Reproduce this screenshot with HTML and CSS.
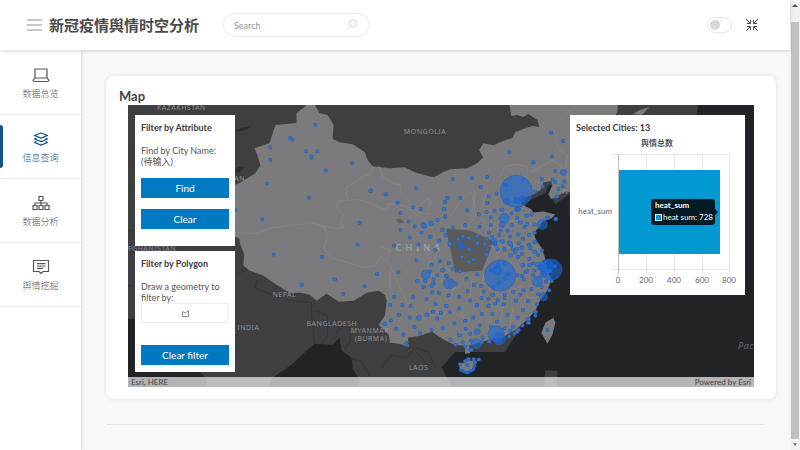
FILE: index.html
```html
<!DOCTYPE html>
<html lang="zh-CN">
<head>
<meta charset="utf-8">
<title>新冠疫情舆情时空分析</title>
<link rel="stylesheet" href="styles.css">
</head>
<body>
<div class="viewport">
  <div class="app">
    <header class="topbar">
      <button class="icon-button" aria-label="Menu"><svg width="15" height="12" viewBox="0 0 15 12"><path d="M0 1h15M0 6h15M0 11h15" stroke="#8b8d8f"/></svg></button>
      <h1 class="brand">新冠疫情舆情时空分析</h1>
      <form class="search">
        <input type="text" placeholder="Search" aria-label="Search">
        <button class="icon-button" type="button" aria-label="Submit search"><svg width="12" height="12" viewBox="0 0 12 12" fill="none" stroke="#cfcfcf"><circle cx="7" cy="4.5" r="3.7"/><path d="M4.3 7.2L.8 10.8"/></svg></button>
      </form>
      <input class="switch" type="checkbox" aria-label="Dark mode">
      <button class="icon-button" aria-label="Exit full screen"><svg width="12" height="12" viewBox="0 0 12 12" fill="none" stroke="#555"><path d="M0 0l4.5 4.5M1 4.5h3.5V1M12 0L7.5 4.5M11 4.5H7.500V1M0 12l4.500-4.500M1 7.500h3.500V11M12 12L7.500 7.500M11 7.500H7.500V11"/></svg></button>
    </header>
    <div class="body">
      <nav class="sidebar">
        <a class="nav-item" href="#"><svg width="18" height="16" viewBox="0 0 18 16" fill="none" stroke="#555" stroke-width="1.2"><path d="M3 11V2h12v9M3 11h12l2 2.500q-.2 1-1.200 1H2.200q-1 0-1.200-1z"/></svg>数据总览</a>
        <a class="nav-item active" href="#"><svg width="18" height="16" viewBox="0 0 18 16" fill="none" stroke="#145388" stroke-width="1.3" stroke-linejoin="round"><path d="M9 2l6.500 2.500L9 7.200 2.500 4.500zM4.500 7l-2 1L9 10.700 15.500 8l-2-1M4.500 10.500l-2 1L9 14.200l6.500-2.700-2-1"/></svg>信息查询</a>
        <a class="nav-item" href="#"><svg width="18" height="16" viewBox="0 0 18 16" fill="none" stroke="#555" stroke-width="1.2"><path d="M7 1.500h4v4H7zM1 10.500h4v4H1zM7 10.500h4v4H7zM13 10.500h4v4h-4zM9 5.500v5M3 10.500V8h12v2.500"/></svg>数据分析</a>
        <a class="nav-item" href="#"><svg width="18" height="16" viewBox="0 0 18 16" fill="none" stroke="#555" stroke-width="1.2"><path d="M1.500 1.500h15v11H11L9 14.500l-2-2H1.500zM5 4.700h8.500M5 7h8.500M5 9.300h6"/></svg>舆情挖掘</a>
      </nav>
      <main class="content">
        <section class="card">
          <h2 class="card-title">Map</h2>
          <div class="map">
            <svg class="map-canvas" viewBox="128 105 626 281" preserveAspectRatio="xMidYMid slice" role="img" aria-label="Map of China">
              <defs>
                <g id="small">
                  <path transform="translate(120 80) scale(.3333)" d="M512 173h0M519 179h0M453 201h0M453 239h0M443 310h0M348 389h0M429 417h0M463 522h0M547 612h0"/>
                  <path transform="translate(300 100) scale(.3333)" d="M48 74h0M19 153h0M53 153h0M36 169h0M36 173h0M79 211h0M158 190h0M28 292h0M212 271h2M257 282h2M349 264h0M293 307h1M302 338h0M339 321h0M362 327h0M180 367h0M174 432h0M302 389h0M326 364h0M345 378h0M412 359h1M435 348h1M431 327h1M435 305h0M442 293h0M365 396h0M330 411h0M390 409h2M418 420h1M428 389h0M437 405h0M283 436h0M355 432h0M448 428h0M406 448h0"/>
                  <path transform="translate(440 100) scale(.3333)" d="M332 97h0M368 123h1M207 156h1M335 168h0M277 186h3M38 237h0M96 233h0M141 230h0M122 261h0M60 293h1M23 293h0M15 305h0M11 327h1M15 348h0M81 330h1M141 308h0M146 288h0M169 280h0M116 342h0M139 335h0M163 331h0M184 328h3M152 351h0M118 379h0M75 374h1M38 381h0M152 374h0M7 389h0M17 404h0M146 396h0M214 339h0M231 353h0M257 346h3M274 342h0M285 274h0M304 236h0M307 259h0M345 212h0M337 238h0M345 246h0M371 244h1M367 258h0M354 267h0M348 289h2M319 352h4M345 356h2M238 366h5M261 370h0M253 379h0M214 374h1M282 372h1M202 390h0M182 391h0M178 404h0M210 408h0M233 402h1M266 404h1M283 397h0M248 415h0M186 423h1M210 430h2M235 428h0M244 441h1M270 443h0M283 425h1M156 409h0M140 416h0M112 407h0M112 428h0M133 430h0M86 413h0M69 408h0M54 417h0M30 428h0M231 326h5M166 432h0M192 444h0M218 446h0M140 447h0M86 447h0M196 254h2M250 239h0"/>
                  <path transform="translate(300 240) scale(.3333)" d="M67 49h0M104 117h2M7 132h0M131 160h0M195 137h0M232 100h0M296 94h0M350 59h0M395 72h1M420 62h0M446 68h0M427 89h3M390 92h0M412 104h0M438 107h0M402 115h0M376 121h0M352 121h1M371 138h1M400 128h1M395 136h1M395 155h2M417 156h0M380 175h0M339 170h0M283 168h0M271 192h0M307 194h0M332 196h0M296 222h1M273 239h0M254 250h2M289 264h0M330 231h0M380 222h2M399 213h1M422 217h0M407 190h0M438 196h2M412 233h0M343 259h1M360 276h0M395 268h1M429 263h0M311 282h0M316 311h1"/>
                  <path transform="translate(440 240) scale(.3333)" d="M112 9h0M133 10h0M162 7h3M185 3h2M213 15h0M231 25h0M207 7h0M172 26h0M193 27h0M210 45h2M138 42h2M66 49h0M99 57h0M86 27h0M30 14h0M223 36h0M233 49h0M245 40h0M244 21h2M265 13h1M270 23h0M283 4h1M282 34h2M305 30h0M293 43h0M267 55h0M246 73h3M267 74h1M261 91h0M256 95h0M278 69h2M293 70h4M297 83h0M303 79h4M290 74h0M312 64h0M306 96h0M315 104h0M326 91h4M344 76h0M317 123h0M334 121h0M303 107h0M282 90h0M278 103h0M245 106h0M251 117h0M231 103h0M304 139h0M326 149h1M293 161h1M274 145h0M249 149h1M240 162h0M218 153h1M226 180h2M194 162h0M193 172h0M190 191h1M172 179h0M165 189h0M156 162h2M145 174h0M131 153h0M144 196h2M124 172h0M109 194h2M90 179h0M101 133h0M83 152h0M122 136h0M79 114h0M111 101h1M38 86h4M7 89h0M19 107h1M48 130h0M26 164h0M58 168h0M18 196h1M58 203h0M30 214h0M3 216h0M43 248h0M75 241h1M99 231h0M125 220h1M156 220h0M170 243h1M202 222h1M232 231h1M248 208h0M263 182h1M290 191h1M284 214h3M263 235h3M263 246h3M285 225h0M247 254h0M235 268h0M231 273h0M218 258h1M194 262h0M222 279h0M207 287h0M210 270h0M118 254h0M77 265h0M90 279h0M56 283h4M32 297h0M46 312h0M68 304h0M75 317h1M93 299h0M125 305h0M127 290h0M146 302h2M152 258h0M10 262h0M86 64h0M60 91h0M173 73h2M193 67h0M203 100h1M195 114h0M177 128h0M160 140h0M152 90h0M94 327h-4M60 370h0M84 355h2M75 361h0M100 355h1M115 356h1M82 373h0M105 364h0M322 268h0"/>
                </g>
                <path id="borders" d="M348 200l-2-12 13-9 13-7 1-6M379 166l4 11 12 7h5l2 9 9 10 8 10h12M235 232l24 1 11-5 18-3 15-1 7-2 15 4 12 2 7-1-3-6 3-6-7-8 2-6 18-2 15 4 12 6h4v-6l18 3 16 12 10 10 3 7M324 226l4 10-4 12 8 10 17 4 15 5 12-2 5-9 9 8 5 12 12 25 6 11 12 7 2-6 13-7 10 4 7-5-7-8 5-12-2-9M390 268l0 17 4 9M381 246l10 4-5 8M438 250l-4 10-7 3 3 12 11 3 5 12M419 206l10-8 2 4-4 8M450 218l8-14 13-13 4 15-3 15-12 7M475 190l-3 22 13 9 2 10M487 190l-5 18 10 8-2 15M500 177l4-10 12-3 11 3-1 13M530 172l22-12 12 9 4 13M556 135l2 14 9 6-2 13M561 119l13-12M493 225l10-6 18 2 12 3M489 245l9 5 21-6M505 237l8 8 11 3M497 260l0-13M518 268l12-9 5 10M507 291l14-6 8 13 11-3M472 275l-2 22-10 12 7 20-15 8M484 273l-4 17 3 23-9 17M505 296l-4 20-8 17M513 306l-4 19M520 295l4 18-10 20M430 308l12 6 9-4 9 6M480 315l12-10 13 2M447 289l12-2 7-13M502 230l-3 23"/>
              </defs>
              <rect x="100" y="80" width="700" height="330" fill="#3f3f41"/>
              <path fill="#222327" d="M128 318l13 0 66 59v12h-80zM273 377l20-14 14-13 8-7 18 1 7-7 2 13 10 7 1 11 6 9v12h-90zM683 105l8 90-35 20h-87v-21l-14 10-3-6 5-12-9-1-3 8-20 9v7l10 7-5 25 10 55-35 55-50 0-13 15v14l5 20h320V105z"/>
              <path fill="#2f2f31" d="M234 131l7-3 11-2-5 4-13 2zM234 169l7-3 4 1-4 5h-7z"/>
              <path fill="#3f3f41" d="M434 377l8-10 10 20h-20zM544 377l1-8 12 1v20h-13zM667 105h30l-7 60-24 20z"/>
              <path fill="#7b7b7d" d="M297 123v-10l8-6 2-4h7l6 10 8 2 6 10-1 14 7 3 13 2 12 8 3 8 5 6 17 2 15-1 10 5 10 3 9 2 9-5 7-3 17-1 10-5 6-6-4-7 4-7 10 2 9-4 10-3 3-6 8-3 9-3 7 1-2-7-9-6-5 3-6-2-6 1-2-13h108v8l-40 82-12-2-8 5-6 3-3-5 4-9-1-4-8 1-2 7-8 5-12 5v5l10 5 2 3 10-1 12 3-4 4-9 3-3 6-6 5 3 8 5 7 3 8 3 15 4 9-4 11-7 9-5 11-8 9-12 10-13 8-12 2-11 3-10 3 1 7-5 1v-8l-11-1-10-5-12-8-12 4-12 2 1 9-10-3-9-1-1-8-10-10 6-9 2-15-2-6-6-4-12 2-13 8-15 1-12-8-10 7-7-6-8-2h-12l-13-8-13-9-14-5-6-5 1-11-4-10-1-6-7-3v-49l12-6 11-7 5-8-3-10-3-7 15-5 6-18z"/>
              <path fill="#7b7b7d" d="M545 322l8-5 2 5-3 12-5 9-6-11zM459 364l9-5 8 2-2 9-8 2-6-3zM632 114l7-4 10-3-8 8z"/>
              <path d="M446 228l24 2 22 10-1 8-9 22-27 2-3-15z" fill="#5b5b5b"/>
              <path fill="#606062" d="M396 219l4-1 4 4-5 1z"/>
              <use href="#borders" class="border-lines"/>
              <path class="country-lines" d="M258 279l-2 8 15 7 20 6 21 2v12l3 28M316 310l12 5v20l-6 8M337 333l5-8 7 2 2 12-6 10M381 368l10-14 15 3 10-10 12 4 8 16M129 285h6M129 230h6M406 340l14 15 8 10M350 357l12 4 9 16M247 268l-12 8"/>
              <g class="map-labels">
                <text x="158" y="110">KAZAKHSTAN</text>
                <text x="404" y="134">MONGOLIA</text>
                <text x="235" y="181">AN</text>
                <text x="129" y="250">FGHANISTAN</text>
                <text x="273" y="296">NEPAL</text>
                <text x="238" y="329">INDIA</text>
                <text x="307" y="325">BANGLADESH</text>
                <text x="351" y="332">MYANMAR</text>
                <text x="355" y="340">(BURMA)</text>
                <text x="409" y="369">LAOS</text>
                <text x="562" y="194">N</text>
                <text x="396" y="250" class="china-label">CHINA</text>
                <text x="737" y="348" class="ocean-label">Pac</text>
              </g>
              <use href="#small" class="dot-ring"/>
              <use href="#small" class="dot-fill"/>
              <g class="bubbles">
                <circle cx="516" cy="191" r="16"/><circle cx="500" cy="275" r="15.500"/><circle cx="551" cy="269" r="10.500"/><circle cx="546" cy="266" r="7"/><circle cx="537" cy="281" r="5"/><circle cx="496" cy="333" r="8"/><circle cx="499" cy="338" r="6"/><circle cx="476" cy="343" r="5"/><circle cx="504" cy="218" r="5"/><circle cx="502" cy="224" r="3"/><circle cx="542" cy="224" r="5"/><circle cx="449" cy="283" r="5.500"/><circle cx="426" cy="274" r="4.500"/><circle cx="461" cy="245" r="4"/><circle cx="424" cy="225" r="3"/><circle cx="431" cy="223" r="2.500"/><circle cx="419" cy="317" r="2.500"/><circle cx="563" cy="172" r="3"/><circle cx="506" cy="201" r="3"/><circle cx="517" cy="200" r="3"/><circle cx="522" cy="199" r="3"/><circle cx="517" cy="209" r="2.500"/><circle cx="543" cy="296" r="4"/><circle cx="477" cy="331" r="3"/><circle cx="497" cy="270" r="4"/><circle cx="494" cy="241" r="3"/>
              </g>
              <path d="M460 369l7 3 6-3 2-5" fill="none" stroke="#1c64c4" stroke-width="3" stroke-linecap="round" stroke-dasharray="1 2"/>
            </svg>
            <div class="map-overlay">
              <div class="filters">
                <section class="panel panel-attribute">
                  <h3>Filter by Attribute</h3>
                  <p>Find by City Name:<br>(待输入)</p>
                  <button class="action">Find</button>
                  <button class="action">Clear</button>
                </section>
                <section class="panel panel-polygon">
                  <h3>Filter by Polygon</h3>
                  <p>Draw a geometry to filter by:</p>
                  <button class="draw" aria-label="Draw polygon"><svg width="9" height="9" viewBox="0 0 9 9" fill="none" stroke="#8a8a7c"><path d="M1.500 2.500v5h6V1.500L4.500 4z"/></svg></button>
                  <button class="action">Clear filter</button>
                </section>
              </div>
              <section class="panel chart-panel">
                <h3>Selected Cities: 13</h3>
                <svg class="chart" viewBox="570 135 175 160" role="img" aria-label="舆情总数">
                  <text x="657" y="146" class="chart-title">舆情总数</text>
                  <path d="M646.500 154v120M674.500 154v120M702.500 154v120M729.500 154v120M612 154.500h118M612 269.500h118" stroke="#e3e3e3" fill="none"/>
                  <path d="M618.500 154v120" stroke="#bdbdbd"/>
                  <rect x="619" y="170" width="101" height="84" fill="#0299d3"/>
                  <g class="axis"><text x="612" y="214" class="axis-y">heat_sum</text><text x="618" y="283">0</text><text x="646" y="283">200</text><text x="674" y="283">400</text><text x="702" y="283">600</text><text x="729" y="283">800</text></g>
                  <path d="M654 199h58q3 0 3 3v7l3 3-3 3v7q0 3-3 3h-58q-3 0-3-3v-20q0-3 3-3z" fill="#021b25"/>
                  <rect x="655.500" y="214.500" width="6" height="6" fill="#0299d3" stroke="#dcecf2"/>
                  <g class="tip"><text x="655" y="208" font-weight="bold">heat_sum</text><text x="663" y="220">heat sum: 728</text></g>
                </svg>
              </section>
            </div>
            <footer class="attribution"><span>Esri, HERE</span><span>Powered by Esri</span></footer>
          </div>
        </section>
        <hr class="rule">
      </main>
    </div>
  </div>
  <div class="scrollbar" aria-hidden="true">
    <svg width="10" height="22" viewBox="0 0 10 22"><path d="M2 7l3-3 3 3z" fill="#505050"/></svg>
    <div class="thumb"></div>
    <svg width="10" height="11" viewBox="0 0 10 11"><path d="M3 4l2 3 2-3z" fill="#777"/></svg>
  </div>
</div>
</body>
</html>
```
FILE: styles.css
```css
* { box-sizing: border-box; }
body {
  margin: 0;
  font-family: Lato, "Noto Sans CJK SC", sans-serif;
  font-size: 9px;
  color: #555;
  background: #f8f8f8;
}
h1, h2, h3, p { margin: 0; }
button { font: inherit; border: 0; padding: 0; background: none; }
svg { display: block; }
.viewport { display: flex; height: 100vh; overflow: hidden; }
.app { flex: 1; min-width: 0; display: flex; flex-direction: column; }

.topbar {
  position: relative;
  z-index: 1;
  flex: none;
  display: flex;
  align-items: center;
  height: 50px;
  padding: 0 32px 0 27px;
  background: #fff;
  box-shadow: 0 1px 4px rgba(0, 0, 0, .16);
}
.icon-button { flex: none; }
.brand { margin-left: 7px; font-size: 15px; line-height: 20px; font-weight: 700; color: #4b4b4b; white-space: nowrap; }
.search {
  display: flex;
  align-items: center;
  width: 147px;
  height: 24px;
  margin: 0 auto 0 24px;
  padding: 0 11px 0 10px;
  border: 1px solid #e9e9e9;
  border-radius: 12px;
}
.search input { flex: 1; min-width: 0; padding: 0; border: 0; outline: 0; background: none; font: inherit; }
.search input::placeholder { color: #949494; }
.switch {
  appearance: none;
  width: 25px;
  height: 16px;
  margin: 0 14px 0 0;
  padding: 2px;
  border: 1px solid #e7e7e7;
  border-radius: 8px;
}
.switch::before { content: ""; display: block; width: 10px; height: 10px; border-radius: 5px; background: #d8d8d8; }

.body { flex: 1; display: flex; min-height: 0; }
.sidebar { flex: none; width: 81px; padding-top: 1px; background: #fff; box-shadow: 0 1px 4px rgba(0, 0, 0, .2); }
.nav-item {
  display: flex;
  flex-direction: column;
  align-items: center;
  justify-content: center;
  gap: 4px;
  height: 64px;
  padding-top: 3px;
  border-bottom: 1px solid #ececec;
  color: #555;
  font-weight: 300;
  line-height: 14px;
  text-decoration: none;
}
.nav-item.active { position: relative; color: #145388; }
.nav-item.active::before {
  content: "";
  position: absolute;
  left: 0;
  top: 10px;
  width: 3px;
  height: 43px;
  border-radius: 0 3px 3px 0;
  background: #145388;
}
.content { flex: 1; min-width: 0; padding: 26px 14px 0 25px; }
.card { padding: 12px 22px 12px; background: #fff; border-radius: 8px; box-shadow: 0 0 4px rgba(0, 0, 0, .12); }
.card-title { margin-left: -9px; color: #444; font-size: 13px; line-height: 17px; font-weight: 700; }
.rule { height: 1px; margin: 25px 12px 0 0; border: 0; background: #e4e4e4; }

.map { position: relative; height: 282px; overflow: hidden; background: #3f3f41; }
.map-canvas { width: 100%; height: 100%; }
.map-labels { font: 7px "Noto Sans", sans-serif; fill: #919193; letter-spacing: 0.5px; }
.china-label { font-size: 9px; letter-spacing: 4px; fill: #aaaaac; }
.ocean-label { font-size: 9px; font-style: italic; fill: #66676b; }
.border-lines { fill: none; stroke: #8c8c8e; stroke-width: .6; stroke-linejoin: round; }
.country-lines { fill: none; stroke: #303032; stroke-width: .7; stroke-linejoin: round; }
.dot-ring, .dot-fill { fill: none; stroke-linecap: round; }
.dot-ring { stroke: #2861b0; stroke-width: 12px; }
.dot-fill { stroke: #3b72c3; stroke-width: 8px; }
.bubbles { fill: #1769dc; fill-opacity: .6; stroke: #2461b9; stroke-width: .6; }
.map-overlay {
  position: absolute;
  inset: 0;
  display: flex;
  justify-content: space-between;
  align-items: flex-start;
  padding: 10px 9px 0 7px;
}
.filters { display: flex; flex-direction: column; gap: 5px; width: 100px; }
.panel { padding: 6px; background: #fff; }
.panel h3 { font-size: 9px; line-height: 14px; font-weight: 700; color: #3c3c3c; white-space: nowrap; }
.panel p { margin-top: 10px; font-size: 9px; line-height: 11px; }
.panel-attribute { height: 131px; }
.panel-polygon { height: 121px; }
.action { display: block; width: 100%; height: 20px; background: #0079c1; color: #fff; font-size: 10px; line-height: 20px; }
.panel-attribute .action { margin-top: 11px; }
.draw { display: grid; place-items: center; width: 100%; height: 20px; border: 1px solid #efefef; }
.panel-polygon .action { margin-top: 22px; }
.chart-panel { width: 175px; padding-bottom: 0; }
.chart { width: 175px; height: 160px; margin-left: -6px; }
.chart text { font-size: 8px; fill: #666; }
.chart .chart-title { font-weight: 700; text-anchor: middle; fill: #555; }
.axis text { text-anchor: middle; }
.axis .axis-y { text-anchor: end; }
.chart .tip text { font-size: 8px; fill: #fff; }
.attribution {
  position: absolute;
  inset: auto 0 0;
  display: flex;
  justify-content: space-between;
  height: 10px;
  padding: 0 3px;
  background: rgba(255, 255, 255, .66);
  color: #444;
  font-size: 8px;
  line-height: 10px;
}
.scrollbar { flex: none; display: flex; flex-direction: column; width: 10px; background: #f1f1f1; }
.thumb { flex: 1; margin: 0 1px; background: #c1c1c1; }
```
